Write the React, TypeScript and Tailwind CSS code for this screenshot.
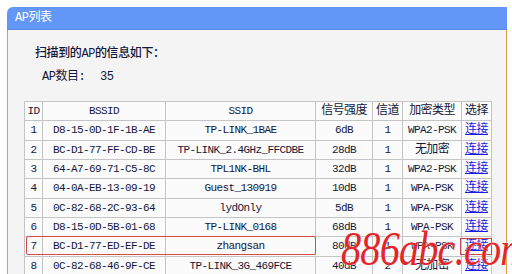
import React from 'react';

type Ap = {
  id: number;
  bssid: string;
  ssid: string;
  signal: string;
  channel: number;
  security: string;
};

const aps: Ap[] = [
  { id: 1, bssid: 'D8-15-0D-1F-1B-AE', ssid: 'TP-LINK_1BAE', signal: '6dB', channel: 1, security: 'WPA2-PSK' },
  { id: 2, bssid: 'BC-D1-77-FF-CD-BE', ssid: 'TP-LINK_2.4GHz_FFCDBE', signal: '28dB', channel: 1, security: '无加密' },
  { id: 3, bssid: '64-A7-69-71-C5-8C', ssid: 'TPL1NK-BHL', signal: '32dB', channel: 1, security: 'WPA2-PSK' },
  { id: 4, bssid: '04-0A-EB-13-09-19', ssid: 'Guest_130919', signal: '10dB', channel: 1, security: 'WPA-PSK' },
  { id: 5, bssid: '0C-82-68-2C-93-64', ssid: 'lydOnly', signal: '5dB', channel: 1, security: 'WPA-PSK' },
  { id: 6, bssid: 'D8-15-0D-5B-01-68', ssid: 'TP-LINK_0168', signal: '68dB', channel: 1, security: 'WPA-PSK' },
  { id: 7, bssid: 'BC-D1-77-ED-EF-DE', ssid: 'zhangsan', signal: '80dB', channel: 1, security: 'WPA-PSK' },
  { id: 8, bssid: '0C-82-68-46-9F-CE', ssid: 'TP-LINK_3G_469FCE', signal: '40dB', channel: 2, security: '无加密' },
];

const cell = 'border border-[#c4c4c4] h-[19.33px] p-0 text-center align-middle whitespace-nowrap';

export default function App() {
  return (
    <div
      className="relative w-[512px] h-[274px] overflow-hidden bg-white pt-[7px] text-[#14183a]"
      style={{ fontFamily: '"Liberation Mono", "Noto Sans CJK SC", monospace' }}
    >
      <div className="ml-[7px] w-[500px]">
        {/* title bar */}
        <div className="h-[23px] rounded-tl-[6px] bg-[#6397f7] border-b border-[#5a88e2] flex items-center pl-[8px]">
          <span className="text-white text-[12px] tracking-[-0.5px]">AP列表</span>
        </div>

        <div className="h-[260px] bg-[#f4f4f4] border-l border-r border-[#e39d3e] pl-[16px]">
          <div className="pt-[16px] pl-[11px] text-[12px] font-medium leading-[16px] tracking-[-0.4px]">
            扫描到的AP的信息如下：
          </div>
          <div className="pt-[7px] pl-[18px] flex text-[12px] leading-[16px]">
            <span className="w-[58px] tracking-[-0.5px]">AP数目:</span>
            <span className="tracking-[-0.5px]">35</span>
          </div>

          <table className="mt-[16px] border-collapse bg-[#fbfbfb] text-[11px] tracking-[-0.6px] leading-[16px]">
            <thead>
              <tr>
                <th className={`${cell} w-[18px] !h-[18px] font-normal`}>ID</th>
                <th className={`${cell} w-[123px] font-normal`}>BSSID</th>
                <th className={`${cell} w-[150px] font-normal`}>SSID</th>
                <th className={`${cell} w-[57px] font-normal text-[12px]`}>信号强度</th>
                <th className={`${cell} w-[30px] font-normal text-[12px]`}>信道</th>
                <th className={`${cell} w-[59px] font-normal text-[12px]`}>加密类型</th>
                <th className={`${cell} w-[30px] font-normal text-[12px]`}>选择</th>
              </tr>
            </thead>
            <tbody>
              {aps.map((ap) => (
                <tr key={ap.id}>
                  <td className={cell}>{ap.id}</td>
                  <td className={cell}>{ap.bssid}</td>
                  <td className={cell}>{ap.ssid}</td>
                  <td className={cell}>{ap.signal}</td>
                  <td className={cell}>{ap.channel}</td>
                  <td className={`${cell} ${ap.security === '无加密' ? 'text-[12px]' : ''}`}>{ap.security}</td>
                  <td className={`${cell} text-[12px]`}>
                    <a className="text-[#1a1ae0] underline" href="#">连接</a>
                  </td>
                </tr>
              ))}
            </tbody>
          </table>
        </div>
      </div>

      {/* highlight boxes */}
      <div className="absolute left-[26px] top-[236px] w-[290px] h-[19px] border-[1.5px] border-[#d24a4a] rounded-[2px]" />
      <div className="absolute left-[460px] top-[238px] w-[32px] h-[17px] border-[1.5px] border-[#c84848]" />

      {/* watermark */}
      <div
        className="absolute left-[341px] top-[225px] origin-left scale-x-[0.84] text-[48px] italic leading-none text-[#e3262a] tracking-[-1px]"
        style={{ fontFamily: '"Liberation Serif", serif', textShadow: '0 0 2px #fff' }}
      >
        886abc.com
      </div>
    </div>
  );
}
